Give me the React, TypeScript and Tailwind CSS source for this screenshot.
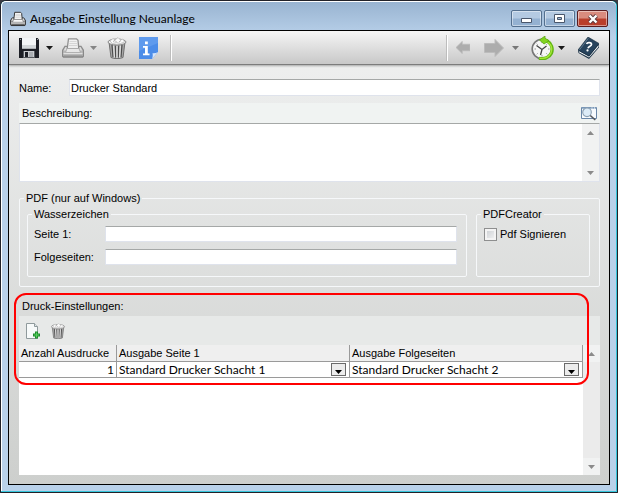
import React, { useState } from 'react';

const UI = "font-['Liberation_Sans',Arial,sans-serif] text-[11px] leading-4";
const SEGOE = "font-['Lato','Open_Sans',sans-serif] text-[12px] leading-4";
const FIELD =
  'border border-t-[#a5a8a7] border-r-[#dfe3ec] border-b-[#dfe3ec] border-l-[#dfe3ec] bg-white outline-none';

function PrinterIcon({ className }: { className: string }) {
  return (
    <svg viewBox="0 0 22 20" className={className} aria-hidden="true">
      <path d="M3 8.500h16l2.500 4v5.500l-1 1h-19l-1-1v-5.500z" fill="#8f8f8f" stroke="#2b2b2b" strokeWidth="1.300" />
      <path d="M3.500 9h15l1.800 3.500H1.700z" fill="#dcdcdc" />
      <path d="M6.500.800h8l1.500 1.500.800 8.400H5.200z" fill="#fff" stroke="#2b2b2b" strokeWidth="1.300" />
      <path d="M7.500 3.500h7M7.300 5.500h7.700M7 7.500h8.300" stroke="#c4c4c4" />
      <path d="M5 10.500h12l1.500 4h-15z" fill="#f8f8f8" stroke="#666" strokeWidth=".8" />
      <path d="M1.500 15.500h19" stroke="#ededed" strokeWidth="1.200" />
      <path d="M2 18h18" stroke="#444" />
    </svg>
  );
}

function SaveIcon() {
  return (
    <svg viewBox="0 0 20 20" className="h-5 w-5" aria-hidden="true">
      <path d="M0 0h18.500L20 1.500V20H0z" fill="#1d1f26" />
      <path d="M3 0h14v10.500H3z" fill="#f3f5f7" />
      <path d="M3 7h14v3.500H3z" fill="#d3d7da" />
      <path d="M1 1h1v1H1zM18 1h1v1h-1z" fill="#9a9da3" />
      <path d="M4 13h12v7H4z" fill="#565a60" />
      <path d="M5 13h10v6H5z" fill="#c9ccd0" />
      <path d="M6 14h3v5H6z" fill="#1d1f26" />
      <path d="M11 14v5M13 14v5" stroke="#8b8f95" />
    </svg>
  );
}

function TrashIcon({ className }: { className: string }) {
  return (
    <svg viewBox="0 0 20 22" className={className} aria-hidden="true">
      <path d="M2 5h16l-2 15.500c-3 1.500-9 1.500-12 0z" fill="#a8a8a8" stroke="#6f6f6f" />
      <path d="M5 8l1 12M8.300 8.500l.4 12M11.700 8.500l-.4 12M15 8l-1 12" stroke="#4c4c4c" strokeWidth="1.200" />
      <path d="M6.600 8.500l.8 12M10 9v12M13.400 8.500l-.8 12" stroke="#e3e3e3" strokeWidth="1.200" />
      <ellipse cx="10" cy="5" rx="9" ry="3" fill="#ededed" stroke="#8a8a8a" />
      <path d="M3 4l3-2.500L8 3l3-2.500L13.500 3 16 2l1.500 3-4 1.500-4-1-4 1z" fill="#fafafa" stroke="#b5b5b5" strokeWidth=".7" />
      <path d="M6 4.500l2-1 1.500 1.500M12 5l2-1.500" stroke="#9a9a9a" strokeWidth=".8" fill="none" />
    </svg>
  );
}

function InfoIcon() {
  return (
    <svg viewBox="0 0 19 22" className="h-[22px] w-[19px]" aria-hidden="true">
      <path d="M0 0h19v15l-6 7H0z" fill="#4b8ce8" />
      <path d="M0 0h19v6L0 14z" fill="#6ba3f0" opacity=".6" />
      <path d="M13 22c.8-2 1-4 .5-5.800 2 .3 3.800-.2 5.500-1.200z" fill="#d5e5fb" />
      <path d="M6 4.500h2.800v2.700H6zM4 9h4.800v7.500h1.700v1.800H4v-1.800h2v-5.700H4z" fill="#fff" />
    </svg>
  );
}

function ArrowIcon({ className, d }: { className: string; d: string }) {
  return (
    <svg viewBox="0 0 20 18" preserveAspectRatio="none" className={className} aria-hidden="true">
      <path d={d} fill="#adadad" stroke="#bcbcbc" strokeWidth="1" strokeLinejoin="round" />
    </svg>
  );
}

function ClockIcon() {
  return (
    <svg viewBox="0 0 23 24" className="h-6 w-[23px]" aria-hidden="true">
      <circle cx="11" cy="13" r="9.800" fill="#f6f6f6" stroke="#777" strokeWidth="1.600" />
      <path d="M11 5.500v1.500M11 19v1.500M3.500 13H5M17 13h1.500M5.700 7.700l1 1M16.300 7.700l-1 1M5.700 18.300l1-1M16.300 18.300l-1-1" stroke="#999" />
      <path d="M5.500 9.500l5.500 4 4.500-3.500M11 13.500l-1.500 5.500" stroke="#444" strokeWidth="1.300" fill="none" />
      <path d="M8 22.300c5.500 1.200 10.500-1 12.300-5C22.300 12.500 20.500 7.500 15.500 4.500" stroke="#62b512" strokeWidth="3.400" fill="none" />
      <path d="M8.500 22.200c5 .8 9.400-1.400 11.300-5C21.700 12.500 20 8 15.500 5" stroke="#a5e838" strokeWidth="1.400" fill="none" />
      <path d="M8.500 4l5.500-4v2.200l4 2.500-5 3.300z" fill="#83d420" stroke="#5ba614" strokeWidth=".8" />
    </svg>
  );
}

function BookIcon() {
  return (
    <svg viewBox="0 0 21 22" className="h-[22px] w-[21px]" aria-hidden="true">
      <path d="M0 13.500L.5 16 11 22l10-11.500V7z" fill="#1d3448" />
      <path d="M1 14l10 5.500L20.500 8v2L11 20.500 1.200 15.500z" fill="#f0f2f4" />
      <path d="M0 13L10 0l11 6.500-10 12.500z" fill="#27435c" stroke="#182c3d" strokeWidth=".6" />
      <path d="M1.500 12.800L10.300 1.300" stroke="#6c8499" strokeWidth=".8" />
      <path d="M8.500 6.800c1-1.800 5-1.400 5 .6 0 1.900-3 1.600-3.500 3.800" stroke="#fff" strokeWidth="1.700" fill="none" />
      <circle cx="9.500" cy="13.400" r="1.100" fill="#fff" />
    </svg>
  );
}

function LookupIcon() {
  return (
    <svg viewBox="0 0 16 15" className="h-[15px] w-4" aria-hidden="true">
      <path d="M.5 1.500h15v11H.5z" fill="#f8fbfe" stroke="#6a87a8" />
      <path d="M1 2h14" stroke="#7f9dbd" strokeWidth="1.500" />
      <path d="M10.500 2h1M13 2h1" stroke="#fff" />
      <circle cx="6" cy="6.300" r="4.300" fill="#dcebf7" stroke="#8ba0b3" strokeWidth="1.100" />
      <path d="M9.300 9.500l5 4.500" stroke="#55585d" strokeWidth="1.600" />
    </svg>
  );
}

function AddPageIcon() {
  return (
    <svg viewBox="0 0 14 16" className="h-4 w-3.5" aria-hidden="true">
      <path d="M.5.500h8l3 3v12H.5z" fill="#f7fafa" stroke="#8f9a9c" />
      <path d="M8.500.500v3h3" fill="#dfe6e8" stroke="#8f9a9c" />
      <path d="M10.500 8.500v7M7 12h7" stroke="#1d8a2c" strokeWidth="3" />
      <path d="M10.500 9.500v5M8 12h5" stroke="#55cf5c" strokeWidth="1.200" />
    </svg>
  );
}

function Caret({ fill }: { fill: string }) {
  return (
    <svg viewBox="0 0 7 4" className="h-1 w-[7px]" aria-hidden="true">
      <path d="M0 0h7L3.500 4z" fill={fill} />
    </svg>
  );
}

function ToolButton({ label, children }: { label: string; children: React.ReactNode }) {
  return (
    <button type="button" aria-label={label} title={label} className="flex shrink-0 items-center justify-center">
      {children}
    </button>
  );
}

function ScrollBar({ className }: { className: string }) {
  return (
    <div className={`flex w-[17px] shrink-0 flex-col justify-between ${className}`} aria-hidden="true">
      <div className="flex h-[17px] items-center justify-center bg-[#f1f2f2]">
        <svg viewBox="0 0 7 4" className="h-1 w-[7px]"><path d="M0 4h7L3.500 0z" fill="#8b8b8b" /></svg>
      </div>
      <div className="flex h-[17px] items-center justify-center bg-[#f1f2f2]">
        <Caret fill="#8b8b8b" />
      </div>
    </div>
  );
}

function WindowButtons() {
  const base =
    'flex h-[17px] w-[31px] items-center justify-center rounded-[2px] border shadow-[inset_0_0_0_1px_rgba(255,255,255,0.45)]';
  const blue = 'border-[#54708f] bg-linear-to-b from-[#b4cae2] from-45% to-[#94b1d1] to-55%';
  return (
    <div className="flex gap-0.5">
      <button type="button" aria-label="Minimieren" className={`${base} ${blue}`}>
        <svg viewBox="0 0 11 9" className="h-[9px] w-[11px]"><path d="M.5 4.500h10v4H.5z" fill="#fff" stroke="#49566b" /></svg>
      </button>
      <button type="button" aria-label="Maximieren" className={`${base} ${blue}`}>
        <svg viewBox="0 0 11 9" className="h-[9px] w-[11px]">
          <path d="M.5.500h10v8H.5z" fill="#fff" stroke="#49566b" />
          <path d="M3.500 3.500h4v2h-4z" fill="#9db8d5" stroke="#49566b" />
        </svg>
      </button>
      <button type="button" aria-label="Schließen" className={`${base} border-[#5a1d20] bg-linear-to-b from-[#d98b7e] from-45% to-[#b93f2c] to-55%`}>
        <svg viewBox="0 0 12 10" className="h-2.5 w-3">
          <path d="M2.500 1.500l7 7M9.500 1.500l-7 7" stroke="#5b3a3e" strokeWidth="4.200" />
          <path d="M2.500 1.500l7 7M9.500 1.500l-7 7" stroke="#fff" strokeWidth="2.400" />
        </svg>
      </button>
    </div>
  );
}

function Group({ title, className, bodyClass, children }: {
  title: string;
  className: string;
  bodyClass: string;
  children: React.ReactNode;
}) {
  return (
    <fieldset className={`min-w-0 rounded-[2px] border border-[#f6f8fa] ${className}`}>
      <legend className="ml-1 px-0.5">{title}</legend>
      <div className={bodyClass}>{children}</div>
    </fieldset>
  );
}

function TextRow({ id, label }: { id: string; label: string }) {
  return (
    <div className="flex items-center">
      <label htmlFor={id} className="w-[71px] shrink-0">{label}</label>
      <input id={id} type="text" className={`h-4 min-w-0 flex-1 px-0.5 ${FIELD}`} />
    </div>
  );
}

function PrinterSelect({ label, options, initial }: { label: string; options: string[]; initial: string }) {
  const [value, setValue] = useState(initial);
  return (
    <div className="relative flex h-[15px]">
      <select
        aria-label={label}
        value={value}
        onChange={(e) => setValue(e.target.value)}
        className={`w-full appearance-none bg-white pl-0.5 outline-none ${SEGOE}`}
      >
        {options.map((o) => (
          <option key={o}>{o}</option>
        ))}
      </select>
      <span className="pointer-events-none absolute top-px right-[3px] flex h-[13px] w-[15px] items-end justify-center border border-[#6a6a6a] bg-[#ececec] pb-px">
        <Caret fill="#000" />
      </span>
    </div>
  );
}

const PRINTERS = ['Standard Drucker Schacht 1', 'Standard Drucker Schacht 2'];

export default function App() {
  const [name, setName] = useState('Drucker Standard');
  const [count, setCount] = useState('1');
  return (
    <div className="flex min-h-screen bg-[#3a3a42]">
      <div className="flex flex-1 flex-col rounded-t-[6px] border border-[#222229] bg-[#35c6dc]">
        <div className="mr-px mb-px flex flex-1 flex-col rounded-t-[5px] border-t border-l border-white bg-[#b9d1ea] bg-linear-to-b from-[#99b4d1] to-[#b9d1ea] to-7% px-1.5 pb-1.5">
          <header className="flex h-7 items-center justify-between pt-[5px] pr-0.5 pl-0.5">
            <div className="flex items-center gap-1">
              <PrinterIcon className="h-4 w-4" />
              <h1 className={`${SEGOE} text-black`}>Ausgabe Einstellung Neuanlage</h1>
            </div>
            <WindowButtons />
          </header>

          <main className={`flex flex-1 flex-col border border-black bg-linear-to-b from-[#f0f1f1] to-[#cdcfcd] text-black ${UI}`}>
            <nav className="flex h-[34px] items-center justify-between border-b border-[#7c7c7c] bg-linear-to-b from-[#f6f6f6] to-[#c8c8c8] px-2.5 shadow-[0_1px_2px_rgba(0,0,0,0.3)]">
              <div className="flex items-center">
                <div className="flex items-center gap-[7px]">
                  <ToolButton label="Speichern"><SaveIcon /></ToolButton>
                  <ToolButton label="Speichern-Optionen"><Caret fill="#1a1a1a" /></ToolButton>
                </div>
                <div className="ml-[9px] flex items-center gap-1.5 opacity-45">
                  <ToolButton label="Drucken"><PrinterIcon className="h-5 w-[22px]" /></ToolButton>
                  <ToolButton label="Druckoptionen"><Caret fill="#1a1a1a" /></ToolButton>
                </div>
                <div className="ml-2.5 flex items-center gap-3">
                  <ToolButton label="Löschen"><TrashIcon className="h-[22px] w-5" /></ToolButton>
                  <ToolButton label="Info"><InfoIcon /></ToolButton>
                  <span className="h-[26px] w-0.5 border-r border-l border-r-white border-l-[#bdbdbd]" />
                </div>
              </div>
              <div className="flex items-center">
                <span className="h-[26px] w-0.5 border-r border-l border-r-white border-l-[#bdbdbd]" />
                <div className="ml-2 flex items-center gap-3.5">
                  <ToolButton label="Zurück"><ArrowIcon className="h-[13px] w-3.5" d="M0 9l9-8.500v4h11v9H9v4z" /></ToolButton>
                  <ToolButton label="Vor"><ArrowIcon className="h-[18px] w-5" d="M19.500 9l-8.500-8.500v4H.5v9H11v4z" /></ToolButton>
                </div>
                <div className="ml-2 flex items-center gap-3">
                  <ToolButton label="Verlauf"><Caret fill="#777" /></ToolButton>
                  <ToolButton label="Zeitplan"><ClockIcon /></ToolButton>
                </div>
                <div className="ml-1 flex items-center gap-[13px]">
                  <ToolButton label="Zeitplan-Optionen"><Caret fill="#1a1a1a" /></ToolButton>
                  <ToolButton label="Hilfe"><BookIcon /></ToolButton>
                </div>
              </div>
            </nav>

            <form className="flex flex-1 flex-col pt-3.5 pr-[9px] pb-[9px] pl-2.5" onSubmit={(e) => e.preventDefault()}>
              <div className="flex items-center">
                <label htmlFor="name" className="w-[50px] shrink-0">Name:</label>
                <input
                  id="name"
                  type="text"
                  value={name}
                  onChange={(e) => setName(e.target.value)}
                  className={`h-[17px] min-w-0 flex-1 px-px ${FIELD}`}
                />
              </div>

              <div className="mt-[7px] flex h-5 items-center justify-between bg-[#f0f3f2] px-[3px]">
                <label htmlFor="description">Beschreibung:</label>
                <ToolButton label="Vorschau"><LookupIcon /></ToolButton>
              </div>
              <div className={`flex h-[59px] ${FIELD}`}>
                <textarea id="description" className="min-w-0 flex-1 resize-none overflow-hidden px-0.5 outline-none" />
                <ScrollBar className="bg-[#f1f2f2]" />
              </div>

              <Group title="PDF (nur auf Windows)" className="mt-2" bodyClass="flex gap-[9px] pr-[9px] pb-[9px] pl-[7px]">
                <Group title="Wasserzeichen" className="flex-1" bodyClass="flex flex-col gap-[7px] pt-1 pr-[9px] pb-[11px] pl-1.5">
                  <TextRow id="page-1" label="Seite 1:" />
                  <TextRow id="next-pages" label="Folgeseiten:" />
                </Group>
                <Group title="PDFCreator" className="w-[114px]" bodyClass="pt-1 pl-[7px]">
                  <label className="flex items-center gap-[3px]">
                    <input
                      type="checkbox"
                      className="h-[13px] w-[13px] appearance-none border border-[#8e8f8f] bg-linear-to-br from-[#c9cdd1] to-[#f6f6f6] shadow-[inset_0_0_0_2px_#f4f4f4] checked:bg-[#4b6a9b]"
                    />
                    Pdf Signieren
                  </label>
                </Group>
              </Group>

              <section className="relative mt-2.5 flex flex-1 flex-col" aria-labelledby="print-settings">
                <h2 id="print-settings" className="h-[19px] pt-px pl-[3px]">Druck-Einstellungen:</h2>
                <div className="flex h-[29px] items-center gap-2.5 bg-[#e7e9e8] pl-[7px]">
                  <ToolButton label="Neu"><AddPageIcon /></ToolButton>
                  <ToolButton label="Entfernen"><TrashIcon className="h-4 w-4" /></ToolButton>
                </div>
                <div className="flex flex-1 bg-white">
                  <div className="min-w-0 flex-1">
                    <table className="w-full table-fixed border-separate border-spacing-0">
                      <colgroup>
                        <col className="w-[98px]" />
                        <col />
                        <col />
                      </colgroup>
                      <thead>
                        <tr className="h-[17px] bg-[#efefef] text-left">
                          {['Anzahl Ausdrucke', 'Ausgabe Seite 1', 'Ausgabe Folgeseiten'].map((h) => (
                            <th key={h} scope="col" className="border-r border-b border-[#9a9a9a] p-0 pl-0.5 font-normal whitespace-nowrap">{h}</th>
                          ))}
                        </tr>
                      </thead>
                      <tbody>
                        <tr>
                          <td className="border-r border-b border-[#9a9a9a] p-0">
                            <input
                              aria-label="Anzahl Ausdrucke"
                              value={count}
                              onChange={(e) => setCount(e.target.value)}
                              className={`block h-[15px] w-full bg-white pr-0.5 text-right outline-none ${SEGOE}`}
                            />
                          </td>
                          <td className="border-r border-b border-[#9a9a9a] p-0">
                            <PrinterSelect label="Ausgabe Seite 1" options={PRINTERS} initial={PRINTERS[0]} />
                          </td>
                          <td className="border-r border-b border-[#9a9a9a] p-0">
                            <PrinterSelect label="Ausgabe Folgeseiten" options={PRINTERS} initial={PRINTERS[1]} />
                          </td>
                        </tr>
                      </tbody>
                    </table>
                  </div>
                  <ScrollBar className="bg-[#ebebeb]" />
                </div>
                <div className="pointer-events-none absolute -top-1 right-[11px] -left-[5px] h-[92px] rounded-[12px] border-2 border-[#ff0000]" />
              </section>
            </form>
          </main>
        </div>
      </div>
    </div>
  );
}
